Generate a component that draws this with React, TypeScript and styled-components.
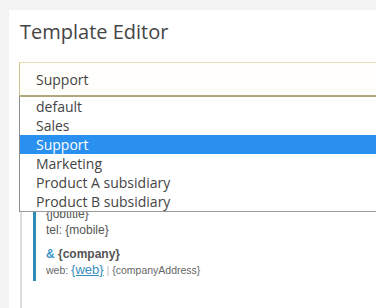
import styled, { createGlobalStyle } from 'styled-components';

const options = ['default', 'Sales', 'Support', 'Marketing', 'Product A subsidiary', 'Product B subsidiary'];
const selected = 'Support';

const GlobalStyle = createGlobalStyle`
  html, body {
    margin: 0;
    padding: 0;
    background: #f3f3f3;
    overflow: hidden;
  }
  body {
    font-family: "Open Sans", "Liberation Sans", sans-serif;
  }
`;

const App = () => {
  return (
    <>
      <GlobalStyle />
      <Page>
        <Card>
          <Title>Template Editor</Title>
          <SelectWrap>
            <SelectBox>{selected}</SelectBox>
            <OptionList>
              {options.map((opt) => (
                <OptionItem key={opt} $active={opt === selected}>
                  {opt}
                </OptionItem>
              ))}
            </OptionList>
          </SelectWrap>
          <Preview>
            <Signature>
              <Line>{'{jobtitle}'}</Line>
              <Line>tel: {'{mobile}'}</Line>
              <CompanyLine>
                <Amp>&amp;</Amp> {'{company}'}
              </CompanyLine>
              <SmallLine>
                web: <WebLink>{'{web}'}</WebLink> <Pipe>|</Pipe> {'{companyAddress}'}
              </SmallLine>
            </Signature>
          </Preview>
        </Card>
      </Page>
    </>
  );
};

export default App;

const Page = styled.div`
  height: 308px;
  overflow: hidden;
  padding: 10px 0 0 9px;
  box-sizing: border-box;
`;

const Card = styled.div`
  height: 300px;
  background: #fff;
  padding: 8px 0 0 10px;
  box-sizing: border-box;
`;

const Title = styled.h1`
  margin: 0 0 16px 1px;
  font-size: 20px;
  font-weight: 400;
  line-height: 28px;
  color: #444;
`;

const SelectWrap = styled.div`
  position: relative;
  z-index: 2;
`;

const SelectBox = styled.div`
  height: 35px;
  box-sizing: border-box;
  border: 1px solid #c9bf90;
  border-right: none;
  border-top-color: #e6ddb2;
  border-bottom: 2px solid #b1a67d;
  background: #fffefa;
  padding: 0 0 0 16px;
  display: flex;
  align-items: center;
  font-size: 14px;
  color: #444;
`;

const OptionList = styled.ul`
  position: absolute;
  top: 35px;
  left: 0;
  right: 0;
  margin: 0;
  padding: 0;
  list-style: none;
  background: #fff;
  border-left: 1px solid #8d8d8d;
  border-bottom: 1px solid #9a9a9a;
`;

const OptionItem = styled.li<{ $active: boolean }>`
  height: 19px;
  line-height: 19px;
  padding-left: 16px;
  font-size: 14px;
  color: ${(p) => (p.$active ? '#fff' : '#444')};
  background: ${(p) => (p.$active ? '#2990ef' : 'transparent')};
`;

const Preview = styled.div`
  margin: 14px 0 0 1px;
  border-left: 2px solid #dcdcdc;
  padding: 95px 0 40px 11px;
  font-family: "Liberation Sans", Arial, sans-serif;
`;

const Signature = styled.div`
  border-left: 3px solid #2f8db5;
  padding: 0 0 3px 10px;
  font-size: 12px;
  color: #555;
`;

const Line = styled.div`
  line-height: 16px;
`;

const CompanyLine = styled.div`
  margin-top: 8px;
  line-height: 16px;
  font-size: 12px;
  font-weight: 700;
  color: #555;
`;

const Amp = styled.span`
  color: #3b93c6;
`;

const SmallLine = styled.div`
  line-height: 16px;
  font-size: 10.5px;
  color: #666;
`;

const WebLink = styled.a`
  font-size: 13px;
  color: #3a8ebb;
  text-decoration: underline;
`;

const Pipe = styled.span`
  color: #bbb;
`;
